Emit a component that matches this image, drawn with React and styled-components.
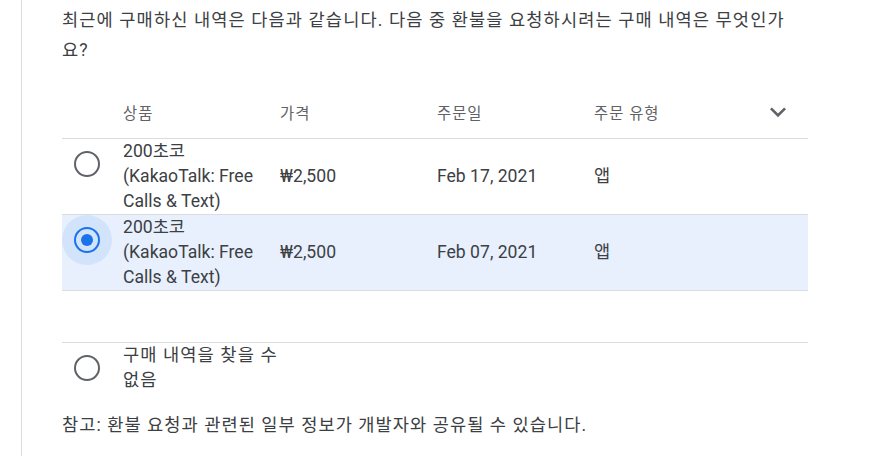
import React, { useState } from 'react';
import styled, { createGlobalStyle } from 'styled-components';

const GlobalStyle = createGlobalStyle`
  body {
    margin: 0;
    background: #fff;
    font-family: Roboto, "Noto Sans CJK KR", sans-serif;
    color: #3c4043;
  }
`;

const Page = styled.div`
  margin-left: 21px;
  min-height: 456px;
  border-left: 1px solid #dadce0;
  padding-left: 40px;
  box-sizing: border-box;
`;

const Content = styled.div`
  width: 746px;
`;

const Question = styled.p`
  margin: 0;
  padding-top: 5px;
  font-size: 17.6px;
  line-height: 30px;
  letter-spacing: 1.1px;
`;

const Grid = styled.div`
  display: grid;
  grid-template-columns: 61px 157px 157px 157px 157px 1fr;
`;

const HeaderRow = styled(Grid)`
  margin-top: 21px;
  height: 52px;
  align-items: center;
  border-bottom: 1px solid #dadce0;
  font-size: 15.4px;
  letter-spacing: 1px;
  color: #5f6368;
`;

const Row = styled(Grid)`
  min-height: 75px;
  border-bottom: 1px solid #dadce0;
  background: ${({ $selected }) => ($selected ? '#e8f0fe' : 'transparent')};
  cursor: pointer;
  font-size: 17.6px;
  line-height: 25px;
`;

const Cell = styled.div`
  display: flex;
  align-items: ${({ $top }) => ($top ? 'flex-start' : 'center')};
`;

const KoText = styled.span`
  letter-spacing: 1.1px;
  word-break: keep-all;
`;

const Halo = styled.div`
  width: 50px;
  height: 50px;
  border-radius: 50%;
  display: flex;
  align-items: center;
  justify-content: center;
  background: ${({ $checked }) => ($checked ? '#d2e3fc' : 'transparent')};
`;

const Radio = styled.span`
  width: 26px;
  height: 26px;
  box-sizing: border-box;
  border-radius: 50%;
  border: 2px solid ${({ $checked }) => ($checked ? '#1a73e8' : '#5f6368')};
  display: flex;
  align-items: center;
  justify-content: center;

  &::after {
    content: '';
    width: 12px;
    height: 12px;
    border-radius: 50%;
    background: #1a73e8;
    display: ${({ $checked }) => ($checked ? 'block' : 'none')};
  }
`;

const Chevron = styled(Cell)`
  justify-content: flex-end;
  padding-right: 14px;
  color: #5f6368;
`;

const Spacer = styled.div`
  height: 51px;
`;

const NoneRow = styled(Grid)`
  border-top: 1px solid #dadce0;
  font-size: 17.6px;
  line-height: 25px;
  cursor: pointer;
`;

const Note = styled.p`
  margin: 20px 0 0;
  font-size: 17.6px;
  line-height: 24px;
  letter-spacing: 1.05px;
`;

const purchases = [
  { id: 1, price: '₩2,500', date: 'Feb 17, 2021', type: '앱' },
  { id: 2, price: '₩2,500', date: 'Feb 07, 2021', type: '앱' },
];

export default function App() {
  const [selected, setSelected] = useState(2);

  return (
    <>
      <GlobalStyle />
      <Page>
        <Content>
          <Question>
            최근에 구매하신 내역은 다음과 같습니다. 다음 중 환불을 요청하시려는 구매 내역은 무엇인가요?
          </Question>
          <HeaderRow>
            <div />
            <div>상품</div>
            <div>가격</div>
            <div>주문일</div>
            <div>주문 유형</div>
            <Chevron>
              <svg width="32" height="32" viewBox="0 0 24 24" fill="currentColor">
                <path d="M7.41 8.59L12 13.17l4.59-4.58L18 10l-6 6-6-6 1.41-1.41z" />
              </svg>
            </Chevron>
          </HeaderRow>
          {purchases.map((p) => (
            <Row key={p.id} $selected={selected === p.id} onClick={() => setSelected(p.id)}>
              <Cell $top>
                <Halo $checked={selected === p.id}>
                  <Radio $checked={selected === p.id} />
                </Halo>
              </Cell>
              <Cell $top>
                <div>
                  200초코
                  <br />
                  (KakaoTalk: Free Calls &amp; Text)
                </div>
              </Cell>
              <Cell>{p.price}</Cell>
              <Cell>{p.date}</Cell>
              <Cell>
                <KoText>{p.type}</KoText>
              </Cell>
              <div />
            </Row>
          ))}
          <Spacer />
          <NoneRow onClick={() => setSelected(0)}>
            <Cell $top>
              <Halo $checked={selected === 0}>
                <Radio $checked={selected === 0} />
              </Halo>
            </Cell>
            <Cell $top>
              <KoText>구매 내역을 찾을 수 없음</KoText>
            </Cell>
          </NoneRow>
          <Note>참고: 환불 요청과 관련된 일부 정보가 개발자와 공유될 수 있습니다.</Note>
        </Content>
      </Page>
    </>
  );
}
